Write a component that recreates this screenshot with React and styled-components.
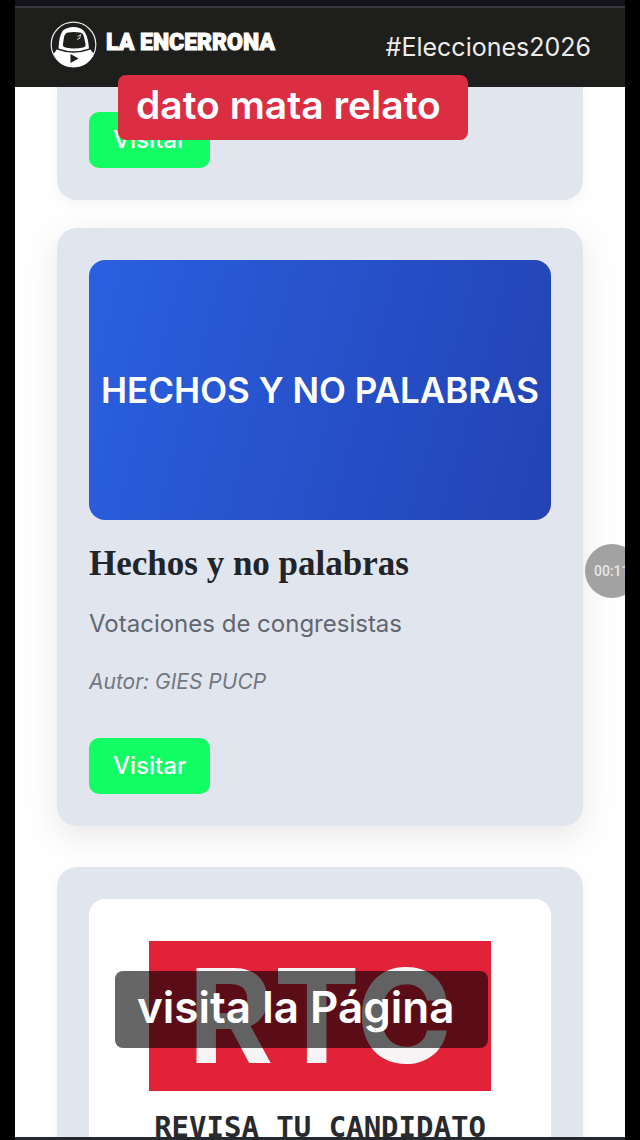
import React from 'react'
import styled, { createGlobalStyle } from 'styled-components'

const GlobalStyle = createGlobalStyle`
* {
  box-sizing: border-box;
}
body {
  margin: 0;
  background: #000;
  font-family: Inter, "Liberation Sans", sans-serif;
}
h2, p {
  margin: 0;
}
`

const Screen = styled.div`
position: relative;
display: flex;
flex-direction: column;
height: 100vh;
margin: 0 15px;
overflow: hidden;
background: #fefefe;
border-bottom: 3px solid #25282d;
`

const StatusBar = styled.div`
flex: none;
height: 8px;
background: #13121a;
border-bottom: 2px solid #38373e;
`

const Header = styled.header`
flex: none;
display: flex;
align-items: center;
justify-content: space-between;
height: 79px;
padding: 0 34px 6px 35px;
background: #1e1e1c;
color: #fff;
`

const Brand = styled.a`
display: flex;
align-items: center;
gap: 9px;
color: #fff;
text-decoration: none;
`

const BrandName = styled.span`
padding-bottom: 4px;
font-family: Roboto, "Liberation Sans", sans-serif;
font-size: 23px;
line-height: 32px;
font-weight: 900;
-webkit-text-stroke: 1px #fff;
`

const Hashtag = styled.span`
padding-top: 4px;
color: #ececea;
font-size: 25px;
line-height: 32px;
`

const Feed = styled.main`
flex: 1;
min-height: 0;
overflow: hidden;
display: flex;
flex-direction: column;
gap: 28px;
padding: 0 42px;
`

const Card = styled.article`
flex: none;
padding: ${(p) => (p.$cut ? '25px 32px 32px' : '32px')};
margin-bottom: ${(p) => (p.$raised ? '13px' : '0')};
border-radius: ${(p) => (p.$cut ? '0 0 20px 20px' : '20px')};
background: #e1e5ee;
box-shadow: ${(p) => (p.$raised ? '0 10px 32px rgba(0, 0, 0, 0.09)' : '0 4px 12px rgba(0, 0, 0, 0.04)')};
`

const Cover = styled.div`
display: flex;
flex-direction: column;
align-items: center;
justify-content: ${(p) => (p.$plain ? 'flex-start' : 'center')};
height: 260px;
border-radius: 16px;
color: #fff;
font-size: 35px;
font-weight: 600;
white-space: nowrap;
background: ${(p) => (p.$plain ? '#fff' : 'linear-gradient(105deg, #2a60e0, #2343b4)')};
`

const Title = styled.h2`
margin-top: 20px;
color: #212529;
font-family: "Liberation Serif", serif;
font-size: 35px;
line-height: 48px;
`

const Description = styled.p`
margin-top: 20px;
color: #62666e;
font-size: 24px;
line-height: 32px;
`

const Author = styled.p`
margin-top: 26px;
margin-bottom: 40px;
color: #73777e;
font-size: 21px;
line-height: 32px;
font-style: italic;
`

const Visit = styled.a`
display: block;
width: fit-content;
padding: 12px 24px;
border-radius: 10px;
background: #12fc63;
color: #fff;
font-size: 24px;
line-height: 32px;
font-weight: 500;
text-decoration: none;
`

const Poster = styled.div`
display: flex;
flex-direction: column;
align-items: center;
padding-top: 42px;
color: #282a2d;
font-family: "DejaVu Sans Mono", monospace;
font-size: 29px;
line-height: 32px;
font-weight: 700;
`

const RtcLogo = styled.div`
width: 342px;
margin-bottom: 20px;
background: #e22239;
color: #f6f4f5;
font-family: Inter, sans-serif;
font-size: 130px;
line-height: 150px;
font-weight: 700;
text-align: center;
`

const Caption = styled.div`
position: absolute;
border-radius: 8px;
color: #fff;
font-weight: 600;
white-space: nowrap;
`

const RedCaption = styled(Caption)`
top: 75px;
left: 103px;
padding: 0 27px 5px 18px;
background: #dc2e43;
font-size: 39px;
line-height: 60px;
`

const DarkCaption = styled(Caption)`
top: 971px;
left: 100px;
padding: 0 34px 5px 22px;
background: rgba(0, 0, 0, 0.6);
font-size: 44px;
line-height: 72px;
`

const Timer = styled.div`
position: absolute;
top: 544px;
right: -14px;
width: 54px;
height: 54px;
padding-left: 9px;
border-radius: 50%;
background: #a2a2a2;
color: #e6e6e6;
font-family: Roboto, sans-serif;
font-size: 14px;
line-height: 54px;
font-weight: 500;
`

const Astronaut = () => (
    <svg width="47" height="47" viewBox="0 0 47 47" aria-hidden="true">
        <circle cx="23.5" cy="23.5" r="22.3" fill="#1e1e1c" stroke="#e8e8e6" strokeWidth="1.2" />
        <path d="M8.500 27.500 Q9 14 13 9.500 Q17 6 23.500 6 Q30 6 33.500 9.500 Q38 14 39 27.500 Q24 33 8.500 27.500Z" fill="#fff" />
        <path d="M18 11.500 Q24 10.500 30 11.500 Q33 12 34 16 L35.500 23 Q36 26 33 26.500 Q24 28.500 15.500 26.500 Q12.500 26 13 23 L14 16 Q15 12 18 11.500Z" fill="#1e1e1c" />
        <path d="M27.500 15.500 L31 13.500 M30.500 14 L29.500 18 M27 18.500 L29 17.500" fill="none" stroke="#cfcfcd" />
        <path d="M6.500 28.500 Q24 35 40.500 28.500 Q42 31 44 32.500 Q38 46 23.500 46 Q9 46 3.500 32.500 Q5.500 31 6.500 28.500Z" fill="#fff" />
        <path d="M20.500 33 L28.500 37.500 L20.500 42Z" fill="#1e1e1c" />
    </svg>
)

const App = () => {
    return (
        <>
            <GlobalStyle />
            <Screen>
                <StatusBar />
                <Header>
                    <Brand href="#inicio">
                        <Astronaut />
                        <BrandName>LA ENCERRONA</BrandName>
                    </Brand>
                    <Hashtag>#Elecciones2026</Hashtag>
                </Header>
                <Feed>
                    <Card $cut>
                        <Visit href="#anterior">Visitar</Visit>
                    </Card>
                    <Card $raised>
                        <Cover>HECHOS Y NO PALABRAS</Cover>
                        <Title>Hechos y no palabras</Title>
                        <Description>Votaciones de congresistas</Description>
                        <Author>Autor: GIES PUCP</Author>
                        <Visit href="#hechos">Visitar</Visit>
                    </Card>
                    <Card>
                        <Cover $plain>
                            <Poster>
                                <RtcLogo>RTC</RtcLogo>
                                REVISA TU CANDIDATO
                            </Poster>
                        </Cover>
                    </Card>
                </Feed>
                <RedCaption>dato mata relato</RedCaption>
                <DarkCaption>visita la Página</DarkCaption>
                <Timer>00:11</Timer>
            </Screen>
        </>
    )
}

export default App
